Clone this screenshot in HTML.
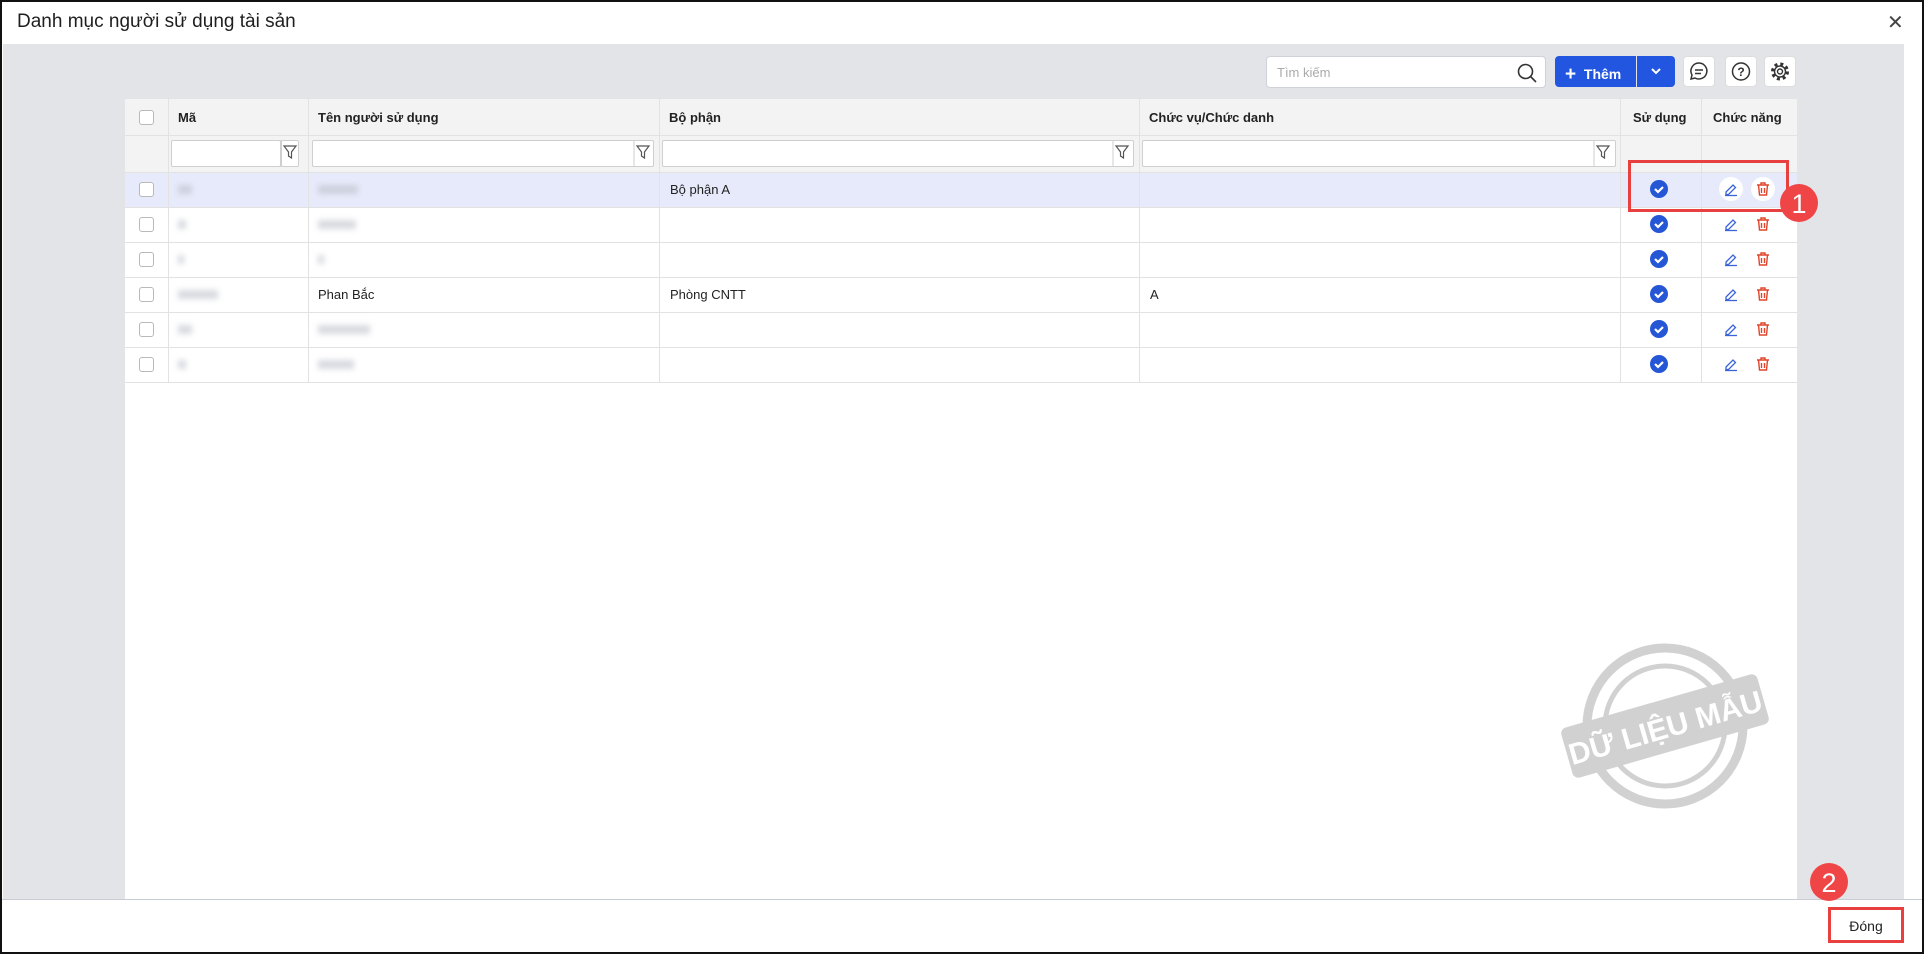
<!DOCTYPE html>
<html><head><meta charset="utf-8"><style>
*{box-sizing:border-box;margin:0;padding:0}
body{width:1924px;height:954px;overflow:hidden;background:#fff;font-family:"Liberation Sans",Arial,sans-serif;position:relative;color:#222}
.frame{position:absolute;left:0;top:0;width:1924px;height:954px;border:2px solid #111;z-index:50;pointer-events:none}
.title{position:absolute;left:17px;top:11px;font-size:19px;color:#1f1f1f}
.close{position:absolute;left:1887px;top:10px;font-size:20px;color:#444}
.gray{position:absolute;left:3px;top:44px;width:1901px;height:855px;background:#e3e4e8}
.footer{position:absolute;left:0;top:899px;width:1924px;height:55px;background:#fff;border-top:1px solid #c8ccd4}
.search{position:absolute;left:1266px;top:56px;width:280px;height:32px;background:#fff;border:1px solid #cfd2d8;border-radius:4px;font-size:13px;color:#aaa;padding:8px 10px}
.btn{position:absolute;top:56px;height:31px;background:#2256e0;color:#fff;font-weight:bold;font-size:14px}
.ib{position:absolute;top:56px;width:32px;height:31px;background:#fff;border-radius:4px;border:1px solid #ddd}
.table{position:absolute;left:125px;top:99px;width:1672px;height:800px;background:#fff}
.hdr{position:absolute;left:0;top:0;width:1672px;height:73px;background:#f3f3f4}
.cell{position:absolute;font-size:13px}
.vl{position:absolute;width:1px;background:#e2e2e2}
.hl{position:absolute;left:0;width:1672px;height:1px;background:#e2e2e2}
.cb{position:absolute;width:15px;height:15px;border:1px solid #b9b9b9;border-radius:3px;background:#fff}
.fi{position:absolute;top:140px;height:27px;border:1px solid #cfcfcf;background:#fff;border-radius:2px}
.blur{position:absolute;height:9px;background:#b8bcc6;filter:blur(3px);opacity:.55}
</style></head><body>
<div class="title">Danh mục người sử dụng tài sản</div>
<div class="close">✕</div>
<div class="gray"></div>
<div class="search">Tìm kiếm
<svg style="position:absolute;right:7px;top:5px" width="22" height="22" viewBox="0 0 22 22"><circle cx="9.5" cy="9.5" r="7" fill="none" stroke="#333" stroke-width="1.6"/><path d="M14.5 14.5L20 20" stroke="#333" stroke-width="1.6"/></svg></div>
<div class="btn" style="left:1555px;width:81px;border-radius:4px 0 0 4px;padding:7px 0 0 10px"><span style="font-size:19px;position:relative;top:1px">+</span>&nbsp; Thêm</div>
<div class="btn" style="left:1637px;width:38px;border-radius:0 4px 4px 0"><svg style="margin:10px 13px" width="12" height="10" viewBox="0 0 12 10"><path d="M2 3l4 4 4-4" stroke="#fff" stroke-width="2" fill="none"/></svg></div>
<div class="ib" style="left:1683px"><svg width="30" height="29" viewBox="0 0 30 29"><path d="M15 6a8 8 0 1 1-4 15l-4 1 1-4A8 8 0 0 1 15 6z" fill="none" stroke="#333" stroke-width="1.5"/><path d="M11 13h8M11 16.5h6" stroke="#333" stroke-width="1.5"/></svg></div>
<div class="ib" style="left:1725px"><svg width="30" height="29" viewBox="0 0 30 29"><circle cx="15" cy="14.5" r="8.5" fill="none" stroke="#333" stroke-width="1.5"/><text x="15" y="19" font-size="12" text-anchor="middle" font-family="Liberation Sans" fill="#333" font-weight="bold">?</text></svg></div>
<div class="ib" style="left:1764px"><svg width="30" height="29" viewBox="0 0 30 29"><circle cx="15" cy="14.5" r="7.5" fill="none" stroke="#333" stroke-width="3" stroke-dasharray="3 2.9"/><circle cx="15" cy="14.5" r="5.5" fill="none" stroke="#333" stroke-width="1.4"/><circle cx="15" cy="14.5" r="2.5" fill="none" stroke="#333" stroke-width="1.4"/></svg></div>

<div class="table">
<div class="hdr"></div>
<div style="position:absolute;left:0;top:73px;width:1672px;height:35px;background:#e7eafa"></div>
<div class="hl" style="top:36px"></div>
<div class="hl" style="top:73px"></div>
<div class="hl" style="top:108px"></div>
<div class="hl" style="top:143px"></div>
<div class="hl" style="top:178px"></div>
<div class="hl" style="top:213px"></div>
<div class="hl" style="top:248px"></div>
<div class="hl" style="top:283px"></div>
<div class="vl" style="left:43px;top:0;height:283px"></div>
<div class="vl" style="left:183px;top:0;height:283px"></div>
<div class="vl" style="left:534px;top:0;height:283px"></div>
<div class="vl" style="left:1014px;top:0;height:283px"></div>
<div class="vl" style="left:1495px;top:0;height:283px"></div>
<div class="vl" style="left:1576px;top:0;height:283px"></div>
<div class="cell" style="left:53px;top:11px;font-weight:bold">Mã</div>
<div class="cell" style="left:193px;top:11px;font-weight:bold">Tên người sử dụng</div>
<div class="cell" style="left:544px;top:11px;font-weight:bold">Bộ phận</div>
<div class="cell" style="left:1024px;top:11px;font-weight:bold">Chức vụ/Chức danh</div>
<div class="cell" style="left:1508px;top:11px;font-weight:bold">Sử dụng</div>
<div class="cell" style="left:1588px;top:11px;font-weight:bold">Chức năng</div>
<div class="cb" style="left:14px;top:11px"></div>
</div>
<div class="fi" style="left:171px;width:110px"></div><div class="fi" style="left:281px;width:18px;top:140px"></div>
<div class="fi" style="left:312px;width:342px"></div>
<div class="fi" style="left:662px;width:472px"></div>
<div class="fi" style="left:1142px;width:474px"></div>
<svg style="position:absolute;left:0;top:0" width="1924" height="954">
<g fill="none" stroke="#555" stroke-width="1.2">
<path d="M284 146h12l-4.5 6v6l-3-2v-4z"/><path d="M637 146h12l-4.5 6v6l-3-2v-4z"/><path d="M1116 146h12l-4.5 6v6l-3-2v-4z"/><path d="M1597 146h12l-4.5 6v6l-3-2v-4z"/>
</g>
<g stroke="#cfcfcf"><line x1="281" y1="140" x2="281" y2="167"/><line x1="634" y1="140" x2="634" y2="167"/><line x1="1113" y1="140" x2="1113" y2="167"/><line x1="1594" y1="140" x2="1594" y2="167"/></g>
</svg>

<div class="cb" style="left:139px;top:182px"></div>
<div class="cb" style="left:139px;top:217px"></div>
<div class="cb" style="left:139px;top:252px"></div>
<div class="cb" style="left:139px;top:287px"></div>
<div class="cb" style="left:139px;top:322px"></div>
<div class="cb" style="left:139px;top:357px"></div>
<div class="blur" style="left:178px;top:185px;width:14px"></div>
<div class="blur" style="left:178px;top:220px;width:8px"></div>
<div class="blur" style="left:178px;top:255px;width:6px"></div>
<div class="blur" style="left:178px;top:290px;width:40px"></div>
<div class="blur" style="left:178px;top:325px;width:14px"></div>
<div class="blur" style="left:178px;top:360px;width:8px"></div>
<div class="blur" style="left:318px;top:185px;width:40px"></div>
<div class="blur" style="left:318px;top:220px;width:38px"></div>
<div class="blur" style="left:318px;top:255px;width:6px"></div>
<div class="blur" style="left:318px;top:325px;width:52px"></div>
<div class="blur" style="left:318px;top:360px;width:36px"></div>
<div class="cell" style="left:670px;top:182px">Bộ phận A</div>
<div class="cell" style="left:318px;top:287px">Phan Bắc</div>
<div class="cell" style="left:670px;top:287px">Phòng CNTT</div>
<div class="cell" style="left:1150px;top:287px">A</div>
<svg style="position:absolute;left:0;top:0" width="1924" height="954">
<defs>
<g id="chk"><circle r="9" fill="#2556d6"/><path d="M-4 0l3 3 5-5" stroke="#fff" stroke-width="2.2" fill="none"/></g>
<g id="ed" fill="none" stroke="#3a63d8" stroke-width="1.3"><path d="M-5 3l7-7 2.5 2.5-7 7h-2.5z"/><path d="M-6 6.5h12"/></g>
<g id="del" fill="none" stroke="#e0452c" stroke-width="1.4"><path d="M-6-4h12M-2-4v-2h4v2M-4.5-4l1 10h7l1-10M-1.5-1v5M1.5-1v5"/></g>
</defs>
<circle cx="1731" cy="189" r="12" fill="#fff"/><circle cx="1763" cy="189" r="12" fill="#fff"/>
<use href="#chk" x="1659" y="189"/><use href="#chk" x="1659" y="224"/><use href="#chk" x="1659" y="259"/><use href="#chk" x="1659" y="294"/><use href="#chk" x="1659" y="329"/><use href="#chk" x="1659" y="364"/>
<use href="#ed" x="1731" y="189"/><use href="#ed" x="1731" y="224"/><use href="#ed" x="1731" y="259"/><use href="#ed" x="1731" y="294"/><use href="#ed" x="1731" y="329"/><use href="#ed" x="1731" y="364"/>
<use href="#del" x="1763" y="189"/><use href="#del" x="1763" y="224"/><use href="#del" x="1763" y="259"/><use href="#del" x="1763" y="294"/><use href="#del" x="1763" y="329"/><use href="#del" x="1763" y="364"/>
<g opacity="0.9">
<circle cx="1665" cy="726" r="78" fill="none" stroke="#cdcdcd" stroke-width="9"/>
<circle cx="1665" cy="726" r="60" fill="none" stroke="#cdcdcd" stroke-width="5"/>
<g transform="rotate(-16 1665 726)">
<rect x="1563" y="700" width="204" height="52" rx="6" fill="#cdcdcd"/>
<text x="1665" y="738" font-family="Liberation Sans" font-weight="bold" font-size="30" fill="#fff" text-anchor="middle">DỮ LIỆU MẪU</text>
</g></g>
<rect x="1629.5" y="161.5" width="158" height="49" fill="none" stroke="#e8403f" stroke-width="3"/>
<circle cx="1799" cy="203" r="19" fill="#f04546"/>
<text x="1799" y="213" font-family="Liberation Sans" font-size="27" fill="#fff" text-anchor="middle">1</text>
</svg>
<div class="footer"></div>
<div style="position:absolute;left:1828px;top:907px;width:76px;height:36px;border:3px solid #e8403f;font-size:14px;text-align:center;padding-top:8px;background:#fff">Đóng</div>
<svg style="position:absolute;left:0;top:0" width="1924" height="954"><circle cx="1829" cy="882" r="19" fill="#f04546"/><text x="1829" y="892" font-family="Liberation Sans" font-size="27" fill="#fff" text-anchor="middle">2</text></svg>
<div class="frame"></div>
</body></html>
